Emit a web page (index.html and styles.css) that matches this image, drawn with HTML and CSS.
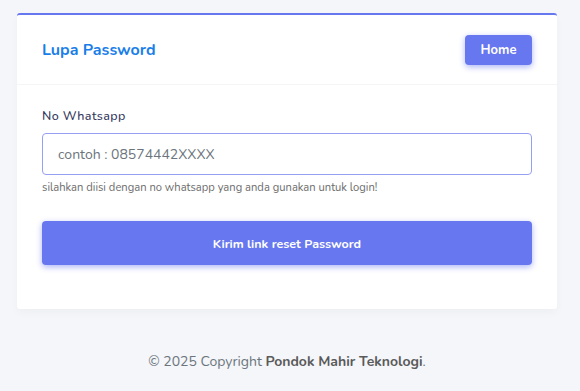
FILE: index.html
```html
<html>
<head>
  <title>Lupa Password</title>
  <link rel="stylesheet" href="styles.css">
</head>
<body>
  <div class="card">
    <div class="card-header">
      <h4>Lupa Password</h4>
      <a href="#" class="btn-home">Home</a>
    </div>
    <div class="card-body">
      <label class="form-label" for="wa">No Whatsapp</label>
      <input type="text" id="wa" class="form-input" placeholder="contoh : 08574442XXXX" />
      <div class="form-text">silahkan diisi dengan no whatsapp yang anda gunakan untuk login!</div>
      <button class="btn-submit">Kirim link reset Password</button>
    </div>
  </div>
  <div class="footer">
    &copy; 2025 Copyright <b>Pondok Mahir Teknologi</b>.
  </div>
</body>
</html>
```

FILE: styles.css
```css
body {
  margin: 0;
  padding: 13px 23px 0 17px;
  background-color: #f4f6f9;
  font-family: "Nunito", Lato, "Noto Sans", sans-serif;
  color: #34395e;
}

.card {
  background-color: #fff;
  border-top: 2px solid #6777ef;
  border-radius: 3px;
  box-shadow: 0 4px 8px rgba(0, 0, 0, 0.03);
}

.card-header {
  display: flex;
  justify-content: space-between;
  align-items: center;
  height: 69px;
  padding: 0 25px;
  border-bottom: 1px solid #f5f5f5;
}

.card-header h4 {
  margin: 0;
  font-size: 16px;
  font-weight: 700;
  color: #1a7ee8;
}

.btn-home {
  display: block;
  width: 67px;
  height: 30px;
  line-height: 30px;
  text-align: center;
  background-color: #6777ef;
  color: #fff;
  font-size: 13px;
  font-weight: 700;
  text-decoration: none;
  border-radius: 4px;
  box-shadow: 0 2px 6px #acb5f6;
}

.card-body {
  padding: 22px 25px 44px;
}

.form-label {
  display: block;
  font-size: 12.5px;
  font-weight: 500;
  letter-spacing: 0.4px;
  margin-bottom: 9px;
}

.form-input {
  display: block;
  box-sizing: border-box;
  width: 100%;
  height: 42px;
  padding: 0 15px;
  border: 1px solid #95a0f4;
  border-radius: 4px;
  font-family: inherit;
  font-size: 14px;
  color: #495057;
  outline: none;
}

.form-input::placeholder {
  color: #6c757d;
}

.form-text {
  margin-top: 5px;
  font-size: 11.2px;
  color: #6c6c6c;
}

.btn-submit {
  display: block;
  width: 100%;
  height: 44px;
  margin-top: 26px;
  border: none;
  border-radius: 4px;
  background-color: #6777ef;
  color: #fff;
  font-family: inherit;
  font-size: 12.5px;
  font-weight: 700;
  box-shadow: 0 2px 6px #acb5f6;
  cursor: pointer;
}

.footer {
  text-align: center;
  margin-top: 43px;
  font-size: 14px;
  color: #6c757d;
}

.footer b {
  color: #5a5a5a;
}
```
